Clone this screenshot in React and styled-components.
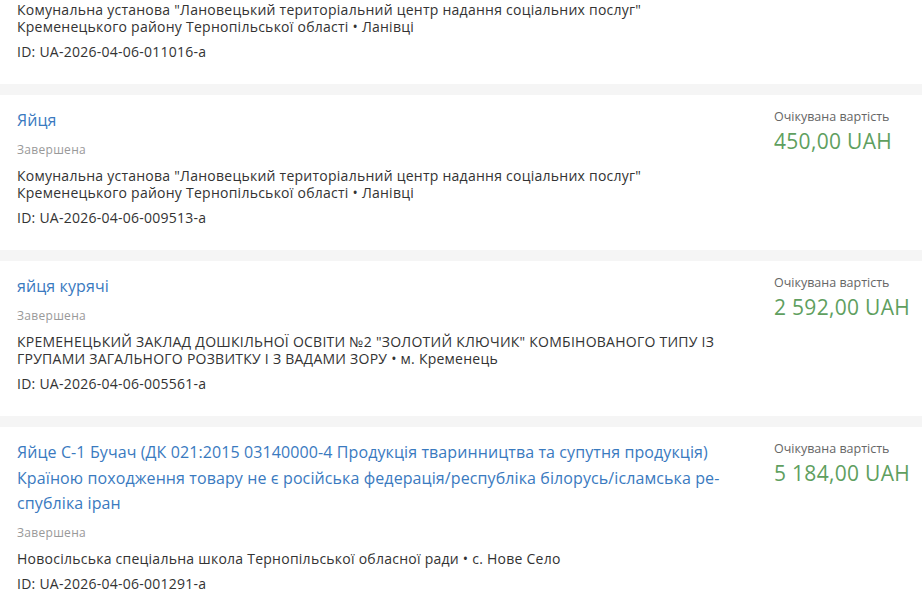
import React from 'react'
import styled, { createGlobalStyle } from 'styled-components'

const GlobalStyle = createGlobalStyle`
	html, body {
		margin: 0;
		padding: 0;
		background: #f5f5f5;
	}
	body {
		font-family: 'Open Sans', 'Noto Sans', sans-serif;
		color: #333;
		overflow: hidden;
	}
`

const tenders = [
	{
		title: 'Яйця курячі столові',
		status: 'Завершена',
		org: 'Комунальна установа "Лановецький територіальний центр надання соціальних послуг" Кременецького району Тернопільської області',
		city: 'Ланівці',
		id: 'UA-2026-04-06-011016-a',
		price: '1 200,00 UAH',
	},
	{
		title: 'Яйця',
		status: 'Завершена',
		org: 'Комунальна установа "Лановецький територіальний центр надання соціальних послуг" Кременецького району Тернопільської області',
		city: 'Ланівці',
		id: 'UA-2026-04-06-009513-a',
		price: '450,00 UAH',
	},
	{
		title: 'яйця курячі',
		status: 'Завершена',
		org: 'КРЕМЕНЕЦЬКИЙ ЗАКЛАД ДОШКІЛЬНОЇ ОСВІТИ №2 "ЗОЛОТИЙ КЛЮЧИК" КОМБІНОВАНОГО ТИПУ ІЗ ГРУПАМИ ЗАГАЛЬНОГО РОЗВИТКУ І З ВАДАМИ ЗОРУ',
		city: 'м. Кременець',
		id: 'UA-2026-04-06-005561-a',
		price: '2 592,00 UAH',
	},
	{
		title: 'Яйце С-1 Бучач (ДК 021:2015 03140000-4 Продукція тваринництва та супутня продукція) Країною походження товару не є російська федерація/республіка білорусь/ісламська ре\u00ADспубліка іран',
		status: 'Завершена',
		org: 'Новосільська спеціальна школа Тернопільської обласної ради',
		city: 'с. Нове Село',
		id: 'UA-2026-04-06-001291-a',
		price: '5 184,00 UAH',
	},
]

const TenderCard = ({ tender }) => (
	<Card>
		<Main>
			<Title href="#">{tender.title}</Title>
			<Status>{tender.status}</Status>
			<Org>
				{tender.org} • {tender.city}
			</Org>
			<TenderId>ID: {tender.id}</TenderId>
		</Main>
		<Side>
			<PriceLabel>Очікувана вартість</PriceLabel>
			<Price>{tender.price}</Price>
		</Side>
	</Card>
)

const App = () => {
	return (
		<>
			<GlobalStyle />
			<List>
				{tenders.map((t) => (
					<TenderCard key={t.id} tender={t} />
				))}
			</List>
		</>
	)
}

// list is scrolled: first card's top is out of view
const List = styled.div`
	display: flex;
	flex-direction: column;
	gap: 11px;
	margin-top: -71.5px;
`

const Card = styled.div`
	display: grid;
	grid-template-columns: 1fr 140px;
	column-gap: 28px;
	background: #fff;
	padding: 13.5px 8px 23.5px 17px;
`

const Main = styled.div`
	display: flex;
	flex-direction: column;
	align-items: flex-start;
	min-width: 0;
`

const Title = styled.a`
	font-size: 16px;
	line-height: 25.5px;
	letter-spacing: 0.1px;
	color: #3a7abf;
	text-decoration: none;
`

const Status = styled.div`
	margin-top: 7px;
	font-size: 12px;
	line-height: 18px;
	letter-spacing: 0.3px;
	color: #999;
`

const Org = styled.div`
	margin-top: 8px;
	font-size: 14px;
	line-height: 17px;
	letter-spacing: 0.25px;
	color: #333;
`

const TenderId = styled.div`
	margin-top: 8.5px;
	font-size: 14px;
	line-height: 17px;
	letter-spacing: 0.25px;
	color: #333;
`

const Side = styled.div`
	display: flex;
	flex-direction: column;
`

const PriceLabel = styled.div`
	font-size: 12.5px;
	line-height: 18px;
	color: #666;
`

const Price = styled.div`
	font-size: 21px;
	line-height: 30px;
	letter-spacing: 0.3px;
	color: #5f9f5f;
	white-space: nowrap;
`

export default App
